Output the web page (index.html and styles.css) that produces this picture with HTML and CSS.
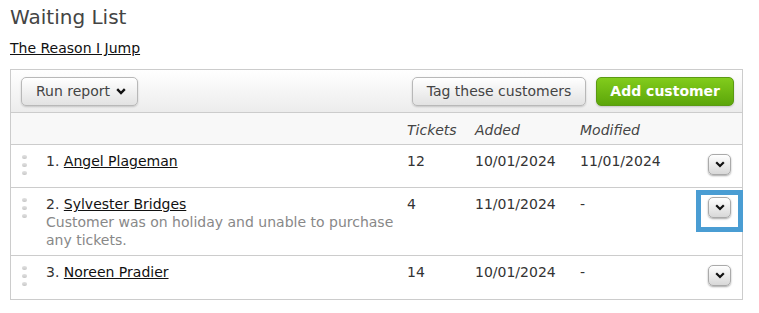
FILE: index.html
```html
<!DOCTYPE html>
<html lang="en">
<head>
<meta charset="utf-8">
<title>Waiting List</title>
<link rel="stylesheet" href="styles.css">
</head>
<body>
<h1 class="title">Waiting List</h1>
<a class="event-link" href="#">The Reason I Jump</a>
<div class="panel">
  <div class="toolbar">
    <button class="btn btn-menu">Run report <svg class="caret" width="10" height="7" viewBox="0 0 10 7"><path d="M1.2 1.2 L5 5 L8.8 1.2" fill="none" stroke="#111" stroke-width="2.4"/></svg></button>
    <div class="spacer"></div>
    <button class="btn btn-tag">Tag these customers</button>
    <button class="btn btn-green">Add customer</button>
  </div>
  <div class="grid head">
    <div></div>
    <div></div>
    <div>Tickets</div>
    <div>Added</div>
    <div>Modified</div>
    <div></div>
  </div>
  <div class="grid row">
    <div class="handle"><i></i><i></i><i></i></div>
    <div class="name">1. <a href="#">Angel Plageman</a></div>
    <div>12</div>
    <div>10/01/2024</div>
    <div>11/01/2024</div>
    <div class="action"><button class="mini"><svg width="10" height="7" viewBox="0 0 10 7"><path d="M1.2 1.2 L5 5 L8.8 1.2" fill="none" stroke="#111" stroke-width="2.2"/></svg></button></div>
  </div>
  <div class="grid row">
    <div class="handle"><i></i><i></i><i></i></div>
    <div class="name">2. <a href="#">Sylvester Bridges</a><div class="note">Customer was on holiday and unable to purchase any tickets.</div></div>
    <div>4</div>
    <div>11/01/2024</div>
    <div>-</div>
    <div class="action"><button class="mini focused"><svg width="10" height="7" viewBox="0 0 10 7"><path d="M1.2 1.2 L5 5 L8.8 1.2" fill="none" stroke="#111" stroke-width="2.2"/></svg></button></div>
  </div>
  <div class="grid row last">
    <div class="handle"><i></i><i></i><i></i></div>
    <div class="name">3. <a href="#">Noreen Pradier</a></div>
    <div>14</div>
    <div>10/01/2024</div>
    <div>-</div>
    <div class="action"><button class="mini"><svg width="10" height="7" viewBox="0 0 10 7"><path d="M1.2 1.2 L5 5 L8.8 1.2" fill="none" stroke="#111" stroke-width="2.2"/></svg></button></div>
  </div>
</div>
</body>
</html>
```

FILE: styles.css
```css
html, body {
  margin: 0;
  padding: 0;
  background: #fff;
}
body {
  padding-left: 10px;
  font-family: "DejaVu Sans", Verdana, sans-serif;
  font-size: 14px;
  line-height: 18px;
  color: #333;
}
.title {
  margin: 5px 0 10px;
  font-size: 20px;
  line-height: 24px;
  font-weight: normal;
  color: #444;
}
.event-link {
  display: block;
  width: max-content;
  color: #111;
  text-decoration: underline;
}
.panel {
  margin-top: 12px;
  width: 733px;
  box-sizing: border-box;
  border: 1px solid #ccc;
}
.toolbar {
  display: flex;
  align-items: center;
  gap: 10px;
  padding: 7px 8px 6px 10px;
  height: 43px;
  box-sizing: border-box;
  background: linear-gradient(#ffffff, #ececec);
  border-bottom: 1px solid #ccc;
}
.spacer { flex: 1; }
.btn {
  font-family: inherit;
  font-size: 14px;
  line-height: 18px;
  color: #444;
  padding: 4px 14px 5px 14px;
  border: 1px solid #b8b8b8;
  border-radius: 5px;
  background: linear-gradient(#ffffff, #e2e2e2);
  box-shadow: 0 1px 2px rgba(0,0,0,0.18);
  display: inline-flex;
  align-items: center;
  gap: 6px;
  cursor: pointer;
}
.btn-menu { padding-right: 11px; }
.btn .caret { margin-top: 1px; }
.btn-green {
  color: #fff;
  font-weight: bold;
  border-color: #5b9a13;
  background: linear-gradient(#82cc1c, #5ca60a);
  padding-left: 13px;
  padding-right: 13px;
}
.grid {
  display: grid;
  grid-template-columns: 35px 361px 68px 105px 1fr 45px;
}
.head {
  background: #f8f8f8;
  border-bottom: 1px solid #ccc;
  padding: 8px 0 5px;
  font-style: italic;
  color: #444;
}
.row {
  padding: 7px 0 6px;
  min-height: 43px;
  box-sizing: border-box;
  border-bottom: 1px solid #ccc;
}
.row.last { border-bottom: none; }
.row a { color: #111; }
.name { padding-right: 10px; }
.note { color: #888; }
.handle {
  display: flex;
  flex-direction: column;
  gap: 4px;
  padding: 3px 0 0 11px;
}
.handle i {
  display: block;
  width: 5px;
  height: 4px;
  border-radius: 2px;
  background: linear-gradient(#e2e2e2, #c8c8c8);
}
.action { padding-left: 11px; }
.mini {
  position: relative;
  margin-top: 2px;
  width: 23px;
  height: 21px;
  padding: 0;
  border: 1px solid #aaa;
  border-radius: 5px;
  background: linear-gradient(#ffffff, #d8d8d8);
  box-shadow: 0 1px 2px rgba(0,0,0,0.35);
  display: flex;
  align-items: center;
  justify-content: center;
}
.mini.focused::after {
  content: "";
  position: absolute;
  left: -13px;
  top: -8px;
  width: 47px;
  height: 42px;
  box-sizing: border-box;
  border: 5px solid #4a9dd3;
}
```
